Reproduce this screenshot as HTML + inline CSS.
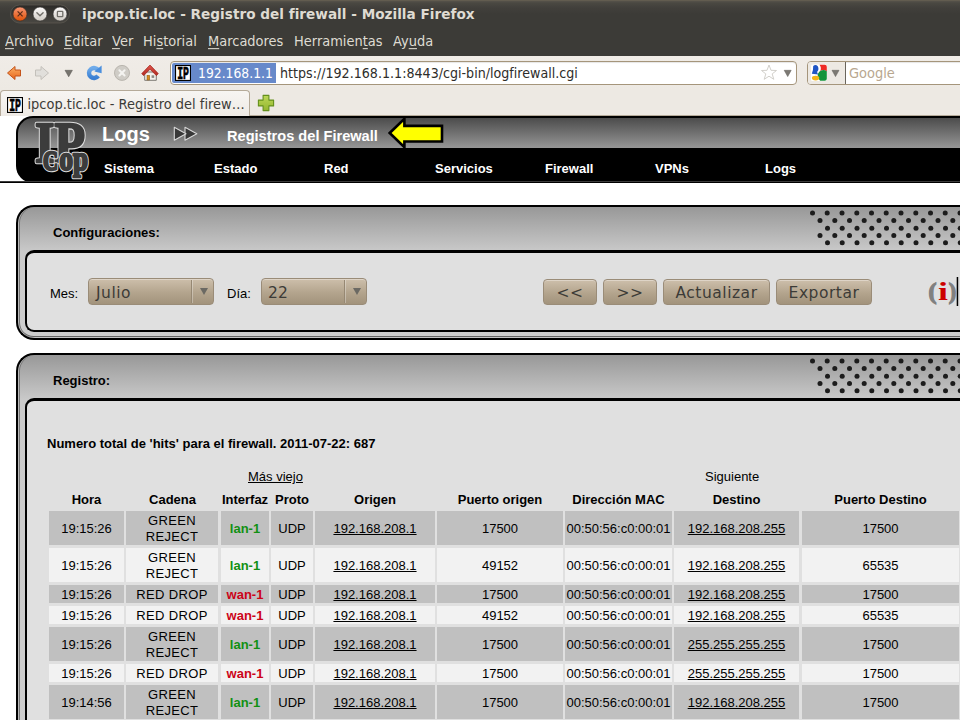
<!DOCTYPE html>
<html lang="es">
<head>
<meta charset="utf-8">
<title>ipcop.tic.loc - Registro del firewall - Mozilla Firefox</title>
<style>
*{box-sizing:border-box;margin:0;padding:0}
html,body{width:960px;height:720px;overflow:hidden;background:#fff}
body{position:relative;font-family:"DejaVu Sans","Liberation Sans",sans-serif}
.abs{position:absolute}
/* ---------- browser chrome ---------- */
#titlebar{left:0;top:0;width:960px;height:28px;background:linear-gradient(#6e6655 0,#56524a 1px,#4a4842 3px,#413f3b 8px,#3c3b37 14px,#3c3b37 100%)}
#titlebar .ttl{left:82px;top:6px;font-size:13.65px;font-weight:bold;color:#dfdbd2;white-space:nowrap;letter-spacing:0}
#menubar{left:0;top:28px;width:960px;height:28px;background:#3c3b37;color:#dfdbd2;font-size:13px}
#menubar span{position:absolute;top:6px;white-space:nowrap;transform:scaleY(1.06);transform-origin:0 80%}
#menubar u{text-decoration:underline;text-underline-offset:2px}
#toolbar{left:0;top:56px;width:960px;height:34px;background:linear-gradient(#f0ece7,#ede9e3)}
#tabbar{left:0;top:90px;width:960px;height:26px;background:#ede9e3}
#content{left:0;top:116px;width:960px;height:604px;background:#fff;overflow:hidden;font-family:"Liberation Sans",sans-serif}

/* toolbar */
.urlbar{left:170px;top:61px;width:627px;height:24px;background:#fff;border:1px solid #a5957b;border-radius:4px;box-shadow:inset 0 1px 1px rgba(0,0,0,.10)}
.idbox{left:172px;top:63px;width:104px;height:20px;background:#6789ca;border-radius:2px 0 0 2px}
.idbox .t{left:26px;top:2.5px;font-size:12.4px;color:#fff;white-space:nowrap;transform:scaleY(1.1);transform-origin:0 80%}
.urltxt{left:280px;top:65.5px;font-size:12.7px;color:#2e2d2a;white-space:nowrap;transform:scaleY(1.09);transform-origin:0 80%}
.favicon{width:14px;height:15px;background:#fff;border:1.5px solid #000;font-family:"Liberation Serif",serif;font-weight:bold;font-size:12px;line-height:12px;color:#000;text-align:center;letter-spacing:-0.5px;overflow:hidden}
.searchbar{left:807px;top:61px;width:160px;height:24px;background:#fff;border:1px solid #a5957b;border-radius:4px;box-shadow:inset 0 1px 1px rgba(0,0,0,.10)}
.searcheng{left:808px;top:62px;width:38px;height:22px;background:#ede9e3;border-radius:3px 0 0 3px;border-right:1px solid #6a655c}
.searchtxt{left:849px;top:65.5px;font-size:13px;color:#b8a78f;white-space:nowrap;transform:scaleY(1.07);transform-origin:0 80%}
/* tabs */
.tab{left:0px;top:90px;width:250px;height:26px;background:linear-gradient(#f7f5f2,#efebe6);border:1px solid #b5aa99;border-bottom:none;border-radius:4px 4px 0 0}
.tab .t{left:26.5px;top:5.5px;font-size:13px;color:#3c3b37;white-space:nowrap;transform:scaleY(1.08);transform-origin:0 80%}
.tabline{left:0;top:115px;width:960px;height:1px;background:#b5aa99}

/* ---------- page ---------- */
#content{color:#000;font-size:13px}
.hdr{left:16px;top:0;width:960px;height:67px;border:2px solid #000;border-right:none;border-radius:17px 0 0 17px;background:linear-gradient(#4c4c4c 0,#969696 30px,#000 30px,#000 100%);overflow:hidden}
.hline{left:0;top:65px;width:960px;height:2px;background:linear-gradient(#3c3c3c 0,#3c3c3c 1px,#000 1px)}
.nav{top:45px;font-weight:bold;font-size:13px;color:#fff;white-space:nowrap;line-height:15px}
.box{left:16px;width:960px;box-shadow:inset 1px 0 0 #b8b8b8,inset 2px 0 0 #777,inset 0 -1px 0 #c4c4c4,inset 0 -2px 0 #666;border:2px solid #000;border-right:none;border-radius:18px 0 0 18px;background:linear-gradient(#989898 0,#cacaca 45px,#cdcdcd 100%)}
.box .bt{left:35px;top:18px;font-weight:bold;font-size:13px;white-space:nowrap;line-height:15px}
.inner{left:7px;top:43px;width:960px;border:2px solid #000;border-top-width:3px;border-right:none;border-radius:9px 0 0 9px;background:#e0e0e0}
.gbtn{top:163px;height:26px;border:1px solid #9a8c78;border-radius:4px;background:linear-gradient(#cdbfab 0,#b3a48d 55%,#a2937c 100%);font-family:"DejaVu Sans",sans-serif;font-size:15.5px;letter-spacing:.52px;color:#3c3b37;text-align:center;line-height:24px;padding-top:1px;white-space:nowrap;box-shadow:inset 0 1px 0 rgba(255,255,255,.35)}
.gsel{text-align:left;padding-left:7px;padding-top:2px;top:162px;height:27px;line-height:24px}
.gsel i{position:absolute;right:21px;top:1px;bottom:1px;width:1px;background:#968873;box-shadow:1px 0 0 rgba(255,255,255,.3)}
.gsel b{position:absolute;right:5.5px;top:9px;width:0;height:0;border-left:4px solid transparent;border-right:4px solid transparent;border-top:7px solid #6b6963}
.lbl{font-size:13px;line-height:15px;white-space:nowrap}
table.log{position:absolute;left:47px;top:393px;border-collapse:separate;border-spacing:0;table-layout:fixed;font-size:13px;line-height:16px}
table.log td{padding:2px 0 0;text-align:center;vertical-align:middle;border-right:2px solid #e0e0e0;border-bottom:3px solid #e0e0e0;background-clip:padding-box}
table.log tr.d td{background-color:#c0c0c0}
table.log tr.l td{background-color:#f2f2f2}
table.log td.w3{border-right-width:3px}
table.log td.cd{letter-spacing:.35px}
table.log a{color:#000;text-decoration:underline}
.g{color:#129012;font-weight:bold}
.r{color:#cc0418;font-weight:bold}
.th{top:376px;font-weight:bold;font-size:13px;line-height:15px;text-align:center;white-space:nowrap}
</style>
</head>
<body>
<div id="titlebar" class="abs">
<svg class="abs" style="left:0;top:0" width="80" height="28" viewBox="0 0 80 28">
  <defs>
    <linearGradient id="gpill" x1="0" y1="0" x2="0" y2="1"><stop offset="0" stop-color="#2b2a27"/><stop offset="1" stop-color="#4a4843"/></linearGradient>
    <linearGradient id="gclose" x1="0" y1="0" x2="0" y2="1"><stop offset="0" stop-color="#f79674"/><stop offset="1" stop-color="#df5106"/></linearGradient>
    <linearGradient id="gbtn" x1="0" y1="0" x2="0" y2="1"><stop offset="0" stop-color="#fdfcfb"/><stop offset="1" stop-color="#cfcbc3"/></linearGradient>
  </defs>
  <rect x="10.5" y="5" width="59" height="18" rx="9" fill="url(#gpill)" stroke="#5a574f" stroke-width=".8"/>
  <circle cx="20" cy="14" r="7" fill="url(#gclose)" stroke="#3a2a22" stroke-width=".6"/>
  <path d="M17.6 11.4 L22.6 16.4 M22.6 11.4 L17.6 16.4" stroke="#5c2c18" stroke-width="1.25" stroke-linecap="butt"/>
  <circle cx="40" cy="14" r="7" fill="url(#gbtn)" stroke="#2f2e2b" stroke-width=".6"/>
  <path d="M36.9 12.7 L40 15.8 L43.1 12.7" stroke="#706e68" stroke-width="1.4" fill="none" stroke-linecap="round" stroke-linejoin="round"/>
  <circle cx="60" cy="14" r="7" fill="url(#gbtn)" stroke="#2f2e2b" stroke-width=".6"/>
  <rect x="57.4" y="11.3" width="5.4" height="5.4" rx=".6" fill="none" stroke="#706e68" stroke-width="1.3"/>
</svg>
<div class="ttl abs">ipcop.tic.loc - Registro del firewall - Mozilla Firefox</div></div>
<div id="menubar" class="abs">
<span style="left:5px"><u>A</u>rchivo</span>
<span style="left:64px"><u>E</u>ditar</span>
<span style="left:112px"><u>V</u>er</span>
<span style="left:143px">Hi<u>s</u>torial</span>
<span style="left:208px"><u>M</u>arcadores</span>
<span style="left:294px">Herramien<u>t</u>as</span>
<span style="left:393px">Ay<u>u</u>da</span>
</div>
<div id="toolbar" class="abs"></div>
<!-- nav icons -->
<svg class="abs" style="left:0;top:55px" width="170" height="35" viewBox="0 55 170 35">
  <defs>
    <linearGradient id="gback" x1="0" y1="0" x2="0" y2="1"><stop offset="0" stop-color="#fbb266"/><stop offset="1" stop-color="#e8641b"/></linearGradient>
    <linearGradient id="grel" x1="0" y1="0" x2="0" y2="1"><stop offset="0" stop-color="#6fabea"/><stop offset="1" stop-color="#3a7fd2"/></linearGradient>
    <linearGradient id="groof" x1="0" y1="0" x2="0" y2="1"><stop offset="0" stop-color="#e2574c"/><stop offset="1" stop-color="#b02a22"/></linearGradient>
  </defs>
  <!-- back -->
  <path d="M7.5 73 L15 66.5 L15 70 L20.5 70 L20.5 76 L15 76 L15 79.5 Z" fill="url(#gback)" stroke="#c4531a" stroke-width="1" stroke-linejoin="round"/>
  <!-- forward -->
  <path d="M48.5 73 L41 66.5 L41 70 L35.5 70 L35.5 76 L41 76 L41 79.5 Z" fill="#e1dfdb" stroke="#c3c0ba" stroke-width="1" stroke-linejoin="round"/>
  <!-- dropdown -->
  <path d="M65 70.3 L72.4 70.3 L68.7 76.8 Z" fill="#77746e" stroke="#55534e" stroke-width=".5"/>
  <!-- reload -->
  <path d="M98.1 75.9 A5 5 0 1 1 98.3 70.4" fill="none" stroke="url(#grel)" stroke-width="4.4"/>
  <path d="M101.6 65.6 L101.6 73.3 L94.4 71.6 Z" fill="#4a8fde"/>
  <!-- stop -->
  <circle cx="122" cy="72.9" r="7.5" fill="#cfccc6" stroke="#b9b5ae" stroke-width="1"/>
  <path d="M119.4 70.3 L124.6 75.5 M124.6 70.3 L119.4 75.5" stroke="#f4f3f0" stroke-width="2" stroke-linecap="round"/>
  <!-- home -->
  <path d="M144.7 72 L144.7 80.3 L156.3 80.3 L156.3 72 Z" fill="#f3f1ec" stroke="#7d7b75" stroke-width="1"/>
  <path d="M141.8 73.6 L150 65.1 L158.2 73.6 L156.4 75.6 L150 69.2 L143.6 75.6 Z" fill="url(#groof)" stroke="#a3231c" stroke-width=".8" stroke-linejoin="round"/>
  <rect x="147" y="75.3" width="2.7" height="4.7" fill="#d98a1d" stroke="#8a5a10" stroke-width=".5"/>
  <rect x="151.6" y="75.3" width="2.6" height="2.6" fill="#8c8a84"/>
</svg>
<div class="urlbar abs"></div>
<div class="idbox abs"><svg class="abs" style="left:3px;top:2px" width="16" height="16" viewBox="0 0 16 16"><rect x=".5" y=".5" width="15" height="15" fill="#fff" stroke="#000" stroke-width="1.2"/><text x="2.2" y="13.6" font-family="'Liberation Mono',monospace" font-weight="bold" font-size="17.5" textLength="11.8" lengthAdjust="spacingAndGlyphs" fill="#000" stroke="#000" stroke-width=".7">IP</text></svg><div class="t abs">192.168.1.1</div></div>
<div class="urltxt abs">https://192.168.1.1:8443/cgi-bin/logfirewall.cgi</div>
<svg class="abs" style="left:758px;top:62px" width="38" height="22" viewBox="758 62 38 22">
  <path d="M769 65 L771 70.3 L776.5 70.5 L772.2 73.9 L773.8 79.3 L769 76.2 L764.2 79.3 L765.8 73.9 L761.5 70.5 L767 70.3 Z" fill="#fff" stroke="#d2d0cb" stroke-width="1" stroke-linejoin="round"/>
  <path d="M784.2 70.3 L791.2 70.3 L787.7 76.6 Z" fill="#7c7973" stroke="#5b5954" stroke-width=".5"/>
</svg>
<div class="searchbar abs"></div>
<div class="searcheng abs"></div>
<svg class="abs" style="left:808px;top:62px" width="37" height="22" viewBox="808 62 37 22">
  <rect x="811" y="64.5" width="16" height="16.5" rx="1.5" fill="#fff"/>
  <path d="M819.5 64.8 h5.3 a2 2 0 0 1 2 2 v4.6 q-3.6 -2.6 -6.6 -.2 q1.6 -3.6 -.7 -6.4 z" fill="#ee2a24"/>
  <path d="M826.8 71.2 v7.6 a2 2 0 0 1 -2 2 h-4.6 q-1.2 -1.8 -2.6 -3.4 q-.6 -3.4 1.6 -5.6 q3.6 -3.4 7.6 -.6 z" fill="#15943a"/>
  <path d="M813.2 66 q2.4 -2.2 4.6 .2 q1.6 3 -.6 5.6 q-.4 1.2 1.2 2.6 l-6.6 -.6 q1.6 -3.6 1.4 -7.8 z" fill="#1f55c4"/>
  <ellipse cx="815.6" cy="78.1" rx="3.7" ry="2.3" fill="#f3b519"/>
  <path d="M832 70.3 L839 70.3 L835.5 76.6 Z" fill="#7c7973" stroke="#5b5954" stroke-width=".5"/>
</svg>
<div class="searchtxt abs">Google</div>
<div id="tabbar" class="abs"></div>
<div class="tabline abs"></div>
<div class="tab abs"><svg class="abs" style="left:6px;top:6px" width="16" height="16" viewBox="0 0 16 16"><rect x=".5" y=".5" width="15" height="15" fill="#fff" stroke="#000" stroke-width="1.2"/><text x="2.2" y="13.6" font-family="'Liberation Mono',monospace" font-weight="bold" font-size="17.5" textLength="11.8" lengthAdjust="spacingAndGlyphs" fill="#000" stroke="#000" stroke-width=".7">IP</text></svg><div class="t abs">ipcop.tic.loc - Registro del firew…</div></div>
<svg class="abs" style="left:256px;top:93px" width="22" height="20" viewBox="256 93 22 20">
  <defs><linearGradient id="gplus" x1="0" y1="0" x2="0" y2="1"><stop offset="0" stop-color="#bcd758"/><stop offset="1" stop-color="#94b62e"/></linearGradient></defs><path d="M263.1 95.4 h5.8 v4.7 h4.7 v5.8 h-4.7 v4.7 h-5.8 v-4.7 h-4.7 v-5.8 h4.7 z" fill="url(#gplus)" stroke="#64901c" stroke-width="1.1" stroke-linejoin="round"/>
</svg>
<div id="content" class="abs">
<div class="hdr abs"></div>
<div class="hline abs"></div>
<svg class="abs" style="left:30px;top:2px" width="66" height="64" viewBox="30 118 66 64">
  <g font-family="'Liberation Serif',serif" font-weight="bold" stroke-linejoin="round">
    <text x="35" y="162" font-size="56.5" textLength="50" lengthAdjust="spacingAndGlyphs" fill="#dcdcdc" stroke="#dcdcdc" stroke-width="4.6">IP</text>
    <text x="35" y="162" font-size="56.5" textLength="50" lengthAdjust="spacingAndGlyphs" fill="#3c3c3c" stroke="#3c3c3c" stroke-width="2.4">IP</text>
    <text x="43" y="169.5" font-size="26.5" textLength="15" lengthAdjust="spacingAndGlyphs" fill="#dcdcdc" stroke="#dcdcdc" stroke-width="4.6">C</text>
    <text x="59.5" y="169.5" font-size="33" textLength="28.5" lengthAdjust="spacingAndGlyphs" fill="#dcdcdc" stroke="#dcdcdc" stroke-width="4.6">op</text>
    <text x="43" y="169.5" font-size="26.5" textLength="15" lengthAdjust="spacingAndGlyphs" fill="#3c3c3c" stroke="#3c3c3c" stroke-width="2.4">C</text>
    <text x="59.5" y="169.5" font-size="33" textLength="28.5" lengthAdjust="spacingAndGlyphs" fill="#3c3c3c" stroke="#3c3c3c" stroke-width="2.4">op</text>
  </g>
</svg>
<div class="abs" style="left:102px;top:6px;font-size:20px;font-weight:bold;color:#fff;line-height:24px">Logs</div>
<svg class="abs" style="left:170px;top:8px" width="32" height="20" viewBox="170 124 32 20">
  <path d="M185 127.3 L196.8 133.7 L185 140.2 Z" fill="#383838" stroke="#d8d8d8" stroke-width="1.1" stroke-linejoin="round"/><path d="M174.3 127.3 L186 133.7 L174.3 140.2 Z" fill="#383838" stroke="#d8d8d8" stroke-width="1.1" stroke-linejoin="round"/>
</svg>
<div class="abs" style="left:227px;top:12px;font-size:14.6px;font-weight:bold;color:#fff;line-height:16px;white-space:nowrap">Registros del Firewall</div>
<svg class="abs" style="left:384px;top:0" width="64" height="34" viewBox="384 116 64 34">
  <path d="M389.7 133 L404.4 118.8 L404.4 125.9 L442 125.9 L442 141.5 L404.4 141.5 L404.4 147.2 Z" fill="#ffff00" stroke="#000" stroke-width="2.6" stroke-linejoin="miter"/>
</svg>
<div class="nav abs" style="left:104px">Sistema</div>
<div class="nav abs" style="left:214px">Estado</div>
<div class="nav abs" style="left:324px">Red</div>
<div class="nav abs" style="left:435px">Servicios</div>
<div class="nav abs" style="left:545px">Firewall</div>
<div class="nav abs" style="left:655px">VPNs</div>
<div class="nav abs" style="left:765px">Logs</div>

<!-- box 1 -->
<div class="box abs" style="top:89px;height:135px">
  <div class="bt abs">Configuraciones:</div>
  <svg class="abs" style="left:778px;top:-2px" width="170" height="43" viewBox="796 205 170 43" fill="#1c1c1c"><circle cx="812.5" cy="213.0" r="2.5"/><circle cx="827.2" cy="213.0" r="2.5"/><circle cx="842.0" cy="213.0" r="2.5"/><circle cx="856.8" cy="213.0" r="2.5"/><circle cx="871.5" cy="213.0" r="2.5"/><circle cx="886.2" cy="213.0" r="2.5"/><circle cx="901.0" cy="213.0" r="2.5"/><circle cx="915.8" cy="213.0" r="2.5"/><circle cx="930.5" cy="213.0" r="2.5"/><circle cx="945.2" cy="213.0" r="2.5"/><circle cx="960.0" cy="213.0" r="2.5"/><circle cx="820.0" cy="220.6" r="2.5"/><circle cx="834.8" cy="220.6" r="2.5"/><circle cx="849.5" cy="220.6" r="2.5"/><circle cx="864.2" cy="220.6" r="2.5"/><circle cx="879.0" cy="220.6" r="2.5"/><circle cx="893.8" cy="220.6" r="2.5"/><circle cx="908.5" cy="220.6" r="2.5"/><circle cx="923.2" cy="220.6" r="2.5"/><circle cx="938.0" cy="220.6" r="2.5"/><circle cx="952.8" cy="220.6" r="2.5"/><circle cx="827.5" cy="228.2" r="2.5"/><circle cx="842.2" cy="228.2" r="2.5"/><circle cx="857.0" cy="228.2" r="2.5"/><circle cx="871.8" cy="228.2" r="2.5"/><circle cx="886.5" cy="228.2" r="2.5"/><circle cx="901.2" cy="228.2" r="2.5"/><circle cx="916.0" cy="228.2" r="2.5"/><circle cx="930.8" cy="228.2" r="2.5"/><circle cx="945.5" cy="228.2" r="2.5"/><circle cx="960.2" cy="228.2" r="2.5"/><circle cx="820.0" cy="235.4" r="2.5"/><circle cx="834.8" cy="235.4" r="2.5"/><circle cx="849.5" cy="235.4" r="2.5"/><circle cx="864.2" cy="235.4" r="2.5"/><circle cx="879.0" cy="235.4" r="2.5"/><circle cx="893.8" cy="235.4" r="2.5"/><circle cx="908.5" cy="235.4" r="2.5"/><circle cx="923.2" cy="235.4" r="2.5"/><circle cx="938.0" cy="235.4" r="2.5"/><circle cx="952.8" cy="235.4" r="2.5"/><circle cx="827.5" cy="242.8" r="2.5"/><circle cx="842.2" cy="242.8" r="2.5"/><circle cx="857.0" cy="242.8" r="2.5"/><circle cx="871.8" cy="242.8" r="2.5"/><circle cx="886.5" cy="242.8" r="2.5"/><circle cx="901.2" cy="242.8" r="2.5"/><circle cx="916.0" cy="242.8" r="2.5"/><circle cx="930.8" cy="242.8" r="2.5"/><circle cx="945.5" cy="242.8" r="2.5"/><circle cx="960.2" cy="242.8" r="2.5"/></svg>
  <div class="inner abs" style="height:82px"></div>
</div>
<div class="lbl abs" style="left:50px;top:170px">Mes:</div>
<div class="gbtn gsel abs" style="left:88px;width:126px">Julio<i></i><b></b></div>
<div class="lbl abs" style="left:227px;top:170px">Día:</div>
<div class="gbtn gsel abs" style="left:261px;width:106px;letter-spacing:.2px;padding-left:6px">22<i></i><b></b></div>
<div class="gbtn abs" style="left:543px;width:54px">&lt;&lt;</div>
<div class="gbtn abs" style="left:603px;width:54px">&gt;&gt;</div>
<div class="gbtn abs" style="left:663px;width:107px">Actualizar</div>
<div class="gbtn abs" style="left:776px;width:96px">Exportar</div>
<svg class="abs" style="left:920px;top:155px" width="40" height="40" viewBox="920 271 40 40">
  <g font-family="'Liberation Serif',serif" font-weight="bold" font-size="26.5">
    <text x="928.4" y="298.5" fill="#808080" stroke="#808080" stroke-width="1.3" textLength="8" lengthAdjust="spacingAndGlyphs" font-size="23.5">(</text>
    <text x="938" y="300" fill="#cc0000" textLength="10" lengthAdjust="spacingAndGlyphs" font-size="25.5">i</text>
    <text x="948.8" y="298.5" fill="#808080" stroke="#808080" stroke-width="1.3" textLength="7.4" lengthAdjust="spacingAndGlyphs" font-size="23.5">)</text>
  </g>
  <rect x="956.7" y="277" width="1.5" height="29" fill="#000"/>
</svg>

<!-- box 2 -->
<div class="box abs" style="top:237px;height:420px">
  <div class="bt abs">Registro:</div>
  <svg class="abs" style="left:778px;top:-2px" width="170" height="43" viewBox="796 205 170 43" fill="#1c1c1c"><circle cx="812.5" cy="213.0" r="2.5"/><circle cx="827.2" cy="213.0" r="2.5"/><circle cx="842.0" cy="213.0" r="2.5"/><circle cx="856.8" cy="213.0" r="2.5"/><circle cx="871.5" cy="213.0" r="2.5"/><circle cx="886.2" cy="213.0" r="2.5"/><circle cx="901.0" cy="213.0" r="2.5"/><circle cx="915.8" cy="213.0" r="2.5"/><circle cx="930.5" cy="213.0" r="2.5"/><circle cx="945.2" cy="213.0" r="2.5"/><circle cx="960.0" cy="213.0" r="2.5"/><circle cx="820.0" cy="220.6" r="2.5"/><circle cx="834.8" cy="220.6" r="2.5"/><circle cx="849.5" cy="220.6" r="2.5"/><circle cx="864.2" cy="220.6" r="2.5"/><circle cx="879.0" cy="220.6" r="2.5"/><circle cx="893.8" cy="220.6" r="2.5"/><circle cx="908.5" cy="220.6" r="2.5"/><circle cx="923.2" cy="220.6" r="2.5"/><circle cx="938.0" cy="220.6" r="2.5"/><circle cx="952.8" cy="220.6" r="2.5"/><circle cx="827.5" cy="228.2" r="2.5"/><circle cx="842.2" cy="228.2" r="2.5"/><circle cx="857.0" cy="228.2" r="2.5"/><circle cx="871.8" cy="228.2" r="2.5"/><circle cx="886.5" cy="228.2" r="2.5"/><circle cx="901.2" cy="228.2" r="2.5"/><circle cx="916.0" cy="228.2" r="2.5"/><circle cx="930.8" cy="228.2" r="2.5"/><circle cx="945.5" cy="228.2" r="2.5"/><circle cx="960.2" cy="228.2" r="2.5"/><circle cx="820.0" cy="235.4" r="2.5"/><circle cx="834.8" cy="235.4" r="2.5"/><circle cx="849.5" cy="235.4" r="2.5"/><circle cx="864.2" cy="235.4" r="2.5"/><circle cx="879.0" cy="235.4" r="2.5"/><circle cx="893.8" cy="235.4" r="2.5"/><circle cx="908.5" cy="235.4" r="2.5"/><circle cx="923.2" cy="235.4" r="2.5"/><circle cx="938.0" cy="235.4" r="2.5"/><circle cx="952.8" cy="235.4" r="2.5"/><circle cx="827.5" cy="242.8" r="2.5"/><circle cx="842.2" cy="242.8" r="2.5"/><circle cx="857.0" cy="242.8" r="2.5"/><circle cx="871.8" cy="242.8" r="2.5"/><circle cx="886.5" cy="242.8" r="2.5"/><circle cx="901.2" cy="242.8" r="2.5"/><circle cx="916.0" cy="242.8" r="2.5"/><circle cx="930.8" cy="242.8" r="2.5"/><circle cx="945.5" cy="242.8" r="2.5"/><circle cx="960.2" cy="242.8" r="2.5"/></svg>
  <div class="inner abs" style="height:400px"></div>
</div>
<div class="abs" style="left:47px;top:320px;font-weight:bold;font-size:13px;line-height:15px;white-space:nowrap">Numero total de 'hits' para el firewall. 2011-07-22: 687</div>
<div class="abs" style="left:248px;top:353px;font-size:13px;line-height:15px;text-decoration:underline;white-space:nowrap">Más viejo</div>
<div class="abs" style="left:705px;top:353px;font-size:13px;line-height:15px;white-space:nowrap">Siguiente</div>
<div class="th abs" style="left:49px;width:75px">Hora</div>
<div class="th abs" style="left:126px;width:93px">Cadena</div>
<div class="th abs" style="left:221px;width:48px">Interfaz</div>
<div class="th abs" style="left:271px;width:42px">Proto</div>
<div class="th abs" style="left:315px;width:120px">Origen</div>
<div class="th abs" style="left:437px;width:126px">Puerto origen</div>
<div class="th abs" style="left:565px;width:107px">Dirección MAC</div>
<div class="th abs" style="left:674px;width:125px">Destino</div>
<div class="th abs" style="left:802px;width:157px">Puerto Destino</div>
<table class="log" style="left:49px;top:395px;width:912px" cellspacing="0"><colgroup><col style="width:77px"><col style="width:95px"><col style="width:50px"><col style="width:44px"><col style="width:122px"><col style="width:128px"><col style="width:109px"><col style="width:128px"><col style="width:159px"></colgroup>
<tr class="d"><td>19:15:26</td><td class="w3 cd">GREEN<br>REJECT</td><td class="g">lan-1</td><td>UDP</td><td><a>192.168.208.1</a></td><td>17500</td><td>00:50:56:c0:00:01</td><td class="w3"><a>192.168.208.255</a></td><td>17500</td></tr>
<tr class="l"><td>19:15:26</td><td class="w3 cd">GREEN<br>REJECT</td><td class="g">lan-1</td><td>UDP</td><td><a>192.168.208.1</a></td><td>49152</td><td>00:50:56:c0:00:01</td><td class="w3"><a>192.168.208.255</a></td><td>65535</td></tr>
<tr class="d"><td>19:15:26</td><td class="w3 cd">RED DROP</td><td class="r">wan-1</td><td>UDP</td><td><a>192.168.208.1</a></td><td>17500</td><td>00:50:56:c0:00:01</td><td class="w3"><a>192.168.208.255</a></td><td>17500</td></tr>
<tr class="l"><td>19:15:26</td><td class="w3 cd">RED DROP</td><td class="r">wan-1</td><td>UDP</td><td><a>192.168.208.1</a></td><td>49152</td><td>00:50:56:c0:00:01</td><td class="w3"><a>192.168.208.255</a></td><td>65535</td></tr>
<tr class="d"><td>19:15:26</td><td class="w3 cd">GREEN<br>REJECT</td><td class="g">lan-1</td><td>UDP</td><td><a>192.168.208.1</a></td><td>17500</td><td>00:50:56:c0:00:01</td><td class="w3"><a>255.255.255.255</a></td><td>17500</td></tr>
<tr class="l"><td>19:15:26</td><td class="w3 cd">RED DROP</td><td class="r">wan-1</td><td>UDP</td><td><a>192.168.208.1</a></td><td>17500</td><td>00:50:56:c0:00:01</td><td class="w3"><a>255.255.255.255</a></td><td>17500</td></tr>
<tr class="d"><td>19:14:56</td><td class="w3 cd">GREEN<br>REJECT</td><td class="g">lan-1</td><td>UDP</td><td><a>192.168.208.1</a></td><td>17500</td><td>00:50:56:c0:00:01</td><td class="w3"><a>192.168.208.255</a></td><td>17500</td></tr>
</table>
</div>
</body>
</html>
